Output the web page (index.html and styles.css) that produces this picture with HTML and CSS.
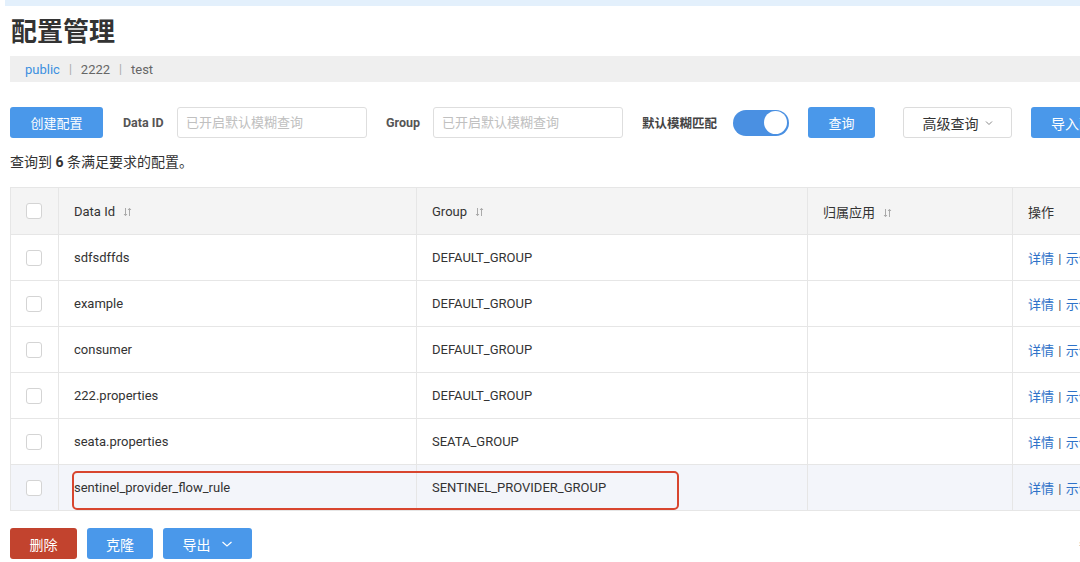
FILE: index.html
```html
<!DOCTYPE html>
<html lang="zh">
<head>
<meta charset="utf-8">
<title>配置管理</title>
<link rel="stylesheet" href="styles.css">
</head>
<body>
<div class="strip"></div>
<div class="page">
  <h1 class="title">配置管理</h1>
  <div class="crumbs">
    <span class="ns active">public</span><span class="sep">|</span><span class="ns">2222</span><span class="sep">|</span><span class="ns">test</span>
  </div>

  <div class="toolbar">
    <button class="btn primary w-create">创建配置</button>
    <label class="lbl lbl-id">Data ID</label>
    <input class="inp" placeholder="已开启默认模糊查询">
    <label class="lbl lbl-group">Group</label>
    <input class="inp" placeholder="已开启默认模糊查询">
    <label class="lbl lbl-fuzzy">默认模糊匹配</label>
    <span class="switch"><span class="knob"></span></span>
    <button class="btn primary w-query">查询</button>
    <button class="btn normal w-adv">高级查询 <svg class="chev" width="8" height="6" viewBox="0 0 8 6"><path d="M1 1.5 L4 4.5 L7 1.5" fill="none" stroke="#888" stroke-width="1"/></svg></button>
    <button class="btn primary w-import">导入配置</button>
  </div>

  <div class="summary">查询到 <b>6</b> 条满足要求的配置。</div>

  <div class="table-wrap">
    <table class="tbl">
      <colgroup>
        <col class="c-chk"><col class="c-id"><col class="c-group"><col class="c-app"><col class="c-op">
      </colgroup>
      <thead>
        <tr>
          <th class="chk"><span class="box"></span></th>
          <th>Data Id <svg class="sort" width="9" height="10" viewBox="0 0 9 10"><path d="M2.5 1 V8.5 M1 7 L2.5 8.7 L4 7 M6.5 9 V1.5 M5 3 L6.5 1.3 L8 3" fill="none" stroke="#aaa" stroke-width="1"/></svg></th>
          <th>Group <svg class="sort" width="9" height="10" viewBox="0 0 9 10"><path d="M2.5 1 V8.5 M1 7 L2.5 8.7 L4 7 M6.5 9 V1.5 M5 3 L6.5 1.3 L8 3" fill="none" stroke="#aaa" stroke-width="1"/></svg></th>
          <th>归属应用 <svg class="sort" width="9" height="10" viewBox="0 0 9 10"><path d="M2.5 1 V8.5 M1 7 L2.5 8.7 L4 7 M6.5 9 V1.5 M5 3 L6.5 1.3 L8 3" fill="none" stroke="#aaa" stroke-width="1"/></svg></th>
          <th>操作</th>
        </tr>
      </thead>
      <tbody>
        <tr><td class="chk"><span class="box"></span></td><td>sdfsdffds</td><td>DEFAULT_GROUP</td><td></td><td class="ops"><a>详情</a> <span class="bar">|</span> <a>示例代码</a></td></tr>
        <tr><td class="chk"><span class="box"></span></td><td>example</td><td>DEFAULT_GROUP</td><td></td><td class="ops"><a>详情</a> <span class="bar">|</span> <a>示例代码</a></td></tr>
        <tr><td class="chk"><span class="box"></span></td><td>consumer</td><td>DEFAULT_GROUP</td><td></td><td class="ops"><a>详情</a> <span class="bar">|</span> <a>示例代码</a></td></tr>
        <tr><td class="chk"><span class="box"></span></td><td>222.properties</td><td>DEFAULT_GROUP</td><td></td><td class="ops"><a>详情</a> <span class="bar">|</span> <a>示例代码</a></td></tr>
        <tr><td class="chk"><span class="box"></span></td><td>seata.properties</td><td>SEATA_GROUP</td><td></td><td class="ops"><a>详情</a> <span class="bar">|</span> <a>示例代码</a></td></tr>
        <tr class="hover"><td class="chk"><span class="box"></span></td><td class="first-id">sentinel_provider_flow_rule</td><td>SENTINEL_PROVIDER_GROUP</td><td></td><td class="ops"><a>详情</a> <span class="bar">|</span> <a>示例代码</a></td></tr>
      </tbody>
    </table>
    <div class="mark"></div>
  </div>

  <div class="footer">
    <button class="btn danger w-del">删除</button>
    <button class="btn primary w-clone">克隆</button>
    <button class="btn primary w-export">导出 <svg class="chev-w" width="12" height="8" viewBox="0 0 12 8"><path d="M1.5 2 L6 6 L10.5 2" fill="none" stroke="#fff" stroke-width="1.2"/></svg></button>
    <span class="pager">每页</span>
  </div>
</div>
</body>
</html>
```

FILE: styles.css
```css
* { box-sizing: border-box; }
html, body { margin: 0; padding: 0; }
body {
  width: 1080px;
  height: 562px;
  overflow: hidden;
  background: #fff;
  font-family: Roboto, "Noto Sans CJK SC", "Noto Sans", sans-serif;
  color: #333;
}
.strip {
  height: 6px;
  margin-left: 5px;
  background: #e3f0fc;
}
.page {
  padding-left: 10px;
  width: 1200px;
}
.title {
  margin: 8px 0 0 1px;
  height: 42px;
  line-height: 36px;
  font-size: 26px;
  font-weight: 700;
  color: #333;
}
.crumbs {
  height: 26px;
  background: #efefef;
  display: flex;
  align-items: center;
  padding-left: 15px;
  font-size: 13px;
  color: #666;
}
.crumbs .active { color: #3c8fe0; }
.crumbs .sep { color: #aaa; margin: 0 9px; font-size: 12px; }

.toolbar {
  margin-top: 25px;
  height: 31px;
  display: flex;
  align-items: center;
}
.btn {
  height: 31px;
  border: 0;
  border-radius: 3px;
  font-family: Roboto, "Noto Sans CJK SC", sans-serif;
  font-size: 13px;
  padding: 0;
  display: inline-flex;
  align-items: center;
  justify-content: center;
  flex: none;
}
.btn.primary { background: #4a98ea; color: #fff; }
.btn.danger { background: #c2432e; color: #fff; }
.btn.normal { background: #fff; color: #333; border: 1px solid #dcdcdc; font-size: 14px; }
.w-create { width: 93px; }
.lbl {
  font-size: 12.5px;
  font-weight: 700;
  color: #555;
  flex: none;
}
.lbl-id { margin-left: 20px; width: 54px; }
.lbl-group { margin-left: 19px; width: 47px; }
.lbl-fuzzy { margin-left: 19px; width: 91px; color: #444; }
.inp {
  width: 190px;
  height: 31px;
  border: 1px solid #dedede;
  border-radius: 3px;
  padding: 0 8px;
  font-family: Roboto, "Noto Sans CJK SC", sans-serif;
  font-size: 13px;
  flex: none;
}
.inp::placeholder { color: #c0c0c0; }
.switch {
  width: 56px;
  height: 26px;
  border-radius: 13px;
  background: #4a90e2;
  display: flex;
  align-items: center;
  justify-content: flex-end;
  padding-right: 2px;
  flex: none;
}
.knob {
  width: 23px;
  height: 23px;
  border-radius: 50%;
  background: #fff;
}
.w-query { width: 67px; margin-left: 19px; }
.w-adv { width: 109px; margin-left: 28px; gap: 6px; }
.w-import { width: 100px; margin-left: 19px; justify-content: flex-start; padding-left: 20px; font-size: 14px; }

.summary {
  margin-top: 14px;
  line-height: 20px;
  font-size: 14px;
  color: #333;
}
.summary b { font-weight: 700; }

.table-wrap {
  position: relative;
  margin-top: 15px;
}
.tbl {
  border-collapse: collapse;
  table-layout: fixed;
  width: 1122px;
  font-size: 13px;
}
.c-chk { width: 48px; }
.c-id { width: 358px; }
.c-group { width: 391px; }
.c-app { width: 205px; }
.c-op { width: 120px; }
.tbl th, .tbl td {
  border: 1px solid #e6e6e6;
  text-align: left;
  padding: 0 15px;
  white-space: nowrap;
  overflow: hidden;
}
.tbl th {
  height: 47px;
  background: #f4f4f4;
  font-weight: 400;
  color: #333;
}
.tbl td { height: 46px; color: #333; }
.tbl th.chk, .tbl td.chk { padding: 0 0 0 15px; }
.tbl tr.hover td { background: #f3f5fa; }
.box {
  display: block;
  width: 16px;
  height: 16px;
  border: 1px solid #d4d4d4;
  border-radius: 3px;
  background: #fff;
}
.sort { margin-left: 5px; vertical-align: -1px; }
.ops a { color: #2f72c8; }
.ops .bar { color: #555; margin: 0 1px; }
.tbl td.first-id { padding-left: 15px; }

.mark {
  position: absolute;
  left: 62px;
  top: 284px;
  width: 607px;
  height: 39px;
  border: 2px solid #d8452e;
  border-radius: 5px;
}

.footer {
  margin-top: 17px;
  height: 31px;
  display: flex;
  align-items: center;
  gap: 10px;
}
.w-del { width: 67px; font-size: 14px; }
.w-clone { width: 66px; font-size: 14px; }
.w-export { width: 89px; gap: 10px; font-size: 14px; }
.pager { margin-left: 817px; font-size: 11px; color: #999; }
```
